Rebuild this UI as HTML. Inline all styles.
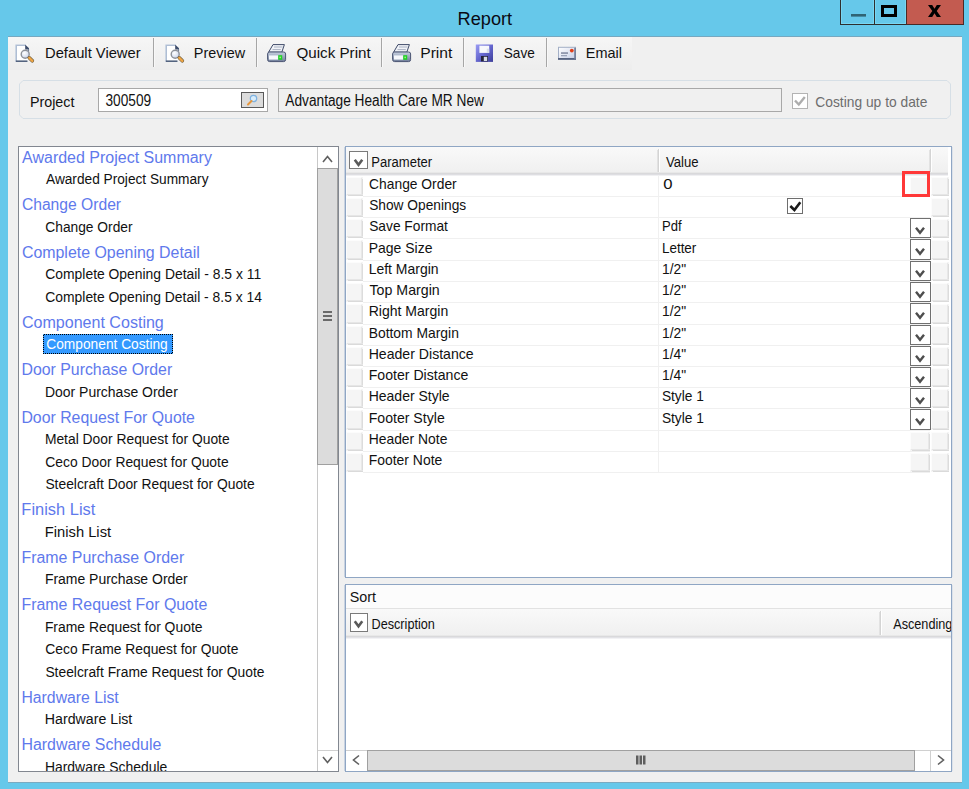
<!DOCTYPE html>
<html><head><meta charset="utf-8"><title>Report</title>
<style>html,body{margin:0;padding:0;background:#66C8EA;width:969px;height:789px;overflow:hidden}
svg{display:block} text{font-family:"Liberation Sans",sans-serif}</style></head>
<body><svg width="969" height="789" viewBox="0 0 969 789" font-family="Liberation Sans, sans-serif"><rect x="0" y="0" width="969" height="789" fill="#66C8EA" />
<text x="457.55" y="25" font-size="18" fill="#0A0A14" textLength="54.57" lengthAdjust="spacingAndGlyphs" >Report</text>
<rect x="840" y="0" width="1" height="25" fill="#2E2E2E" />
<rect x="874" y="0" width="1" height="25" fill="#2E2E2E" />
<rect x="840" y="24" width="66" height="1" fill="#2E2E2E" />
<rect x="841" y="0" width="1" height="24" fill="#79D6F2" />
<rect x="873" y="0" width="1" height="24" fill="#79D6F2" />
<rect x="875" y="0" width="1" height="24" fill="#79D6F2" />
<rect x="905" y="0" width="1" height="24" fill="#79D6F2" />
<rect x="841" y="23" width="33" height="1" fill="#79D6F2" />
<rect x="875" y="23" width="31" height="1" fill="#79D6F2" />
<rect x="851" y="14" width="15" height="2.6" fill="#306474" />
<rect x="882.5" y="6.5" width="13" height="9" fill="none" stroke="#000" stroke-width="3"/>
<rect x="906" y="0" width="58" height="25" fill="#C35B50" />
<rect x="906" y="0" width="1" height="25" fill="#4A2A26" />
<rect x="963" y="0" width="1" height="25" fill="#4A2A26" />
<rect x="906" y="24" width="58" height="1" fill="#4A2A26" />
<path d="M928 5 H932.2 L934.5 8.8 L936.8 5 H941 L936.7 11 L941 17 H936.8 L934.5 13.2 L932.2 17 H928 L932.3 11 Z" fill="#000"/>
<rect x="8" y="36" width="954" height="1" fill="#76A8C0" />
<rect x="8" y="37" width="954" height="745" fill="#F0F0F0" />
<rect x="8" y="782" width="954" height="1" fill="#7AAAC0" />
<defs><linearGradient id="tb" x1="0" y1="0" x2="0" y2="1"><stop offset="0" stop-color="#F6F6F6"/><stop offset="1" stop-color="#EDEDED"/></linearGradient><linearGradient id="gh" x1="0" y1="0" x2="0" y2="1"><stop offset="0" stop-color="#F9F9F9"/><stop offset="1" stop-color="#F0F0F0"/></linearGradient><linearGradient id="cell" x1="0" y1="0" x2="1" y2="1"><stop offset="0" stop-color="#FAFAFA"/><stop offset="1" stop-color="#E6E6E6"/></linearGradient></defs>
<rect x="8" y="37" width="624" height="33" fill="url(#tb)" />
<rect x="153" y="38" width="1" height="29" fill="#A6A6A6" />
<rect x="154" y="38" width="1" height="29" fill="#F8F8F8" />
<rect x="256" y="38" width="1" height="29" fill="#A6A6A6" />
<rect x="257" y="38" width="1" height="29" fill="#F8F8F8" />
<rect x="381" y="38" width="1" height="29" fill="#A6A6A6" />
<rect x="382" y="38" width="1" height="29" fill="#F8F8F8" />
<rect x="463" y="38" width="1" height="29" fill="#A6A6A6" />
<rect x="464" y="38" width="1" height="29" fill="#F8F8F8" />
<rect x="546" y="38" width="1" height="29" fill="#A6A6A6" />
<rect x="547" y="38" width="1" height="29" fill="#F8F8F8" />
<g transform="translate(15,44)"><defs><radialGradient id="lens{x}" cx="0.4" cy="0.35" r="0.7"><stop offset="0" stop-color="#FFFFFF"/><stop offset="1" stop-color="#C9D3EA"/></radialGradient></defs><rect x="0.5" y="0.5" width="12.5" height="17" fill="#FFFFFF"/><path d="M1.2 17.5 V1.2 H10.5" fill="none" stroke="#AFBED4" stroke-width="1.6"/><path d="M0.8 17.2 H12.5" stroke="#53637F" stroke-width="1.6"/><path d="M10.2 0.4 L14 4.2 L14 5.5 L10.2 5.5 Z" fill="#3E4D6C"/><path d="M13.5 5 V9" stroke="#6F7E98" stroke-width="1.2"/><circle cx="10.2" cy="10.2" r="4" fill="url(#lens{x})" stroke="#8D9199" stroke-width="1.4"/><path d="M14.3 13.8 L17.3 16.8" stroke="#6B5A3A" stroke-width="3.6" stroke-linecap="round"/><path d="M14.3 13.8 L17.3 16.8" stroke="#EEA545" stroke-width="2.4" stroke-linecap="round"/></g>
<text x="45.02" y="58" font-size="15" fill="#111" textLength="95.60" lengthAdjust="spacingAndGlyphs" >Default Viewer</text>
<g transform="translate(165,44)"><defs><radialGradient id="lens{x}" cx="0.4" cy="0.35" r="0.7"><stop offset="0" stop-color="#FFFFFF"/><stop offset="1" stop-color="#C9D3EA"/></radialGradient></defs><rect x="0.5" y="0.5" width="12.5" height="17" fill="#FFFFFF"/><path d="M1.2 17.5 V1.2 H10.5" fill="none" stroke="#AFBED4" stroke-width="1.6"/><path d="M0.8 17.2 H12.5" stroke="#53637F" stroke-width="1.6"/><path d="M10.2 0.4 L14 4.2 L14 5.5 L10.2 5.5 Z" fill="#3E4D6C"/><path d="M13.5 5 V9" stroke="#6F7E98" stroke-width="1.2"/><circle cx="10.2" cy="10.2" r="4" fill="url(#lens{x})" stroke="#8D9199" stroke-width="1.4"/><path d="M14.3 13.8 L17.3 16.8" stroke="#6B5A3A" stroke-width="3.6" stroke-linecap="round"/><path d="M14.3 13.8 L17.3 16.8" stroke="#EEA545" stroke-width="2.4" stroke-linecap="round"/></g>
<text x="193.85" y="58" font-size="15" fill="#111" textLength="51.21" lengthAdjust="spacingAndGlyphs" >Preview</text>
<g transform="translate(267,44)"><defs><linearGradient id="pb{x}" x1="0" y1="0" x2="0" y2="1"><stop offset="0" stop-color="#C9D2E2"/><stop offset="1" stop-color="#6E7C98"/></linearGradient></defs><path d="M6 0.6 H17.4 L14.8 8.2 H1.6 Z" fill="#F1F3F8" stroke="#3F4A68" stroke-width="1"/><path d="M7 3 H15.5 M5.5 5.6 H13.8" stroke="#A9B1C2" stroke-width="1"/><rect x="0.6" y="8" width="18" height="9.6" rx="2" fill="url(#pb{x})" stroke="#4A5472" stroke-width="1"/><rect x="2" y="11.4" width="9.5" height="4.2" fill="#F6F8FC"/><rect x="11.2" y="11.2" width="4" height="4.6" fill="#1FD126"/><rect x="12.4" y="12.6" width="1.6" height="1.6" fill="#9CF07A"/></g>
<text x="296.52" y="58" font-size="15" fill="#111" textLength="74.14" lengthAdjust="spacingAndGlyphs" >Quick Print</text>
<g transform="translate(392,44)"><defs><linearGradient id="pb{x}" x1="0" y1="0" x2="0" y2="1"><stop offset="0" stop-color="#C9D2E2"/><stop offset="1" stop-color="#6E7C98"/></linearGradient></defs><path d="M6 0.6 H17.4 L14.8 8.2 H1.6 Z" fill="#F1F3F8" stroke="#3F4A68" stroke-width="1"/><path d="M7 3 H15.5 M5.5 5.6 H13.8" stroke="#A9B1C2" stroke-width="1"/><rect x="0.6" y="8" width="18" height="9.6" rx="2" fill="url(#pb{x})" stroke="#4A5472" stroke-width="1"/><rect x="2" y="11.4" width="9.5" height="4.2" fill="#F6F8FC"/><rect x="11.2" y="11.2" width="4" height="4.6" fill="#1FD126"/><rect x="12.4" y="12.6" width="1.6" height="1.6" fill="#9CF07A"/></g>
<text x="420.25" y="58" font-size="15" fill="#111" textLength="32.04" lengthAdjust="spacingAndGlyphs" >Print</text>
<g transform="translate(475.8,44.2)"><defs><linearGradient id="fd{x}" x1="0" y1="0" x2="1" y2="1"><stop offset="0" stop-color="#9A9CF4"/><stop offset="0.5" stop-color="#6566CE"/><stop offset="1" stop-color="#3E3F9A"/></linearGradient></defs><rect x="0" y="0.3" width="17.2" height="17.4" fill="url(#fd{x})"/><rect x="3.6" y="1.5" width="9.8" height="7.2" fill="#F7F8FC"/><rect x="11" y="4.5" width="2.4" height="4.2" fill="#D8DEEA"/><rect x="5.2" y="11.8" width="7" height="5.4" fill="#23233A"/><rect x="8" y="12.6" width="3.4" height="4.2" fill="#D6DAE6"/></g>
<text x="503.79" y="58" font-size="15" fill="#111" textLength="31.05" lengthAdjust="spacingAndGlyphs" >Save</text>
<g transform="translate(558,46.8)"><defs><linearGradient id="em{x}" x1="0" y1="0" x2="1" y2="1"><stop offset="0" stop-color="#FFFFFF"/><stop offset="1" stop-color="#C5CDE6"/></linearGradient></defs><rect x="0.5" y="0.5" width="17" height="12" fill="url(#em{x})" stroke="#A3AFC6" stroke-width="1"/><rect x="0" y="11.2" width="18" height="1.8" fill="#566380"/><rect x="16.2" y="1" width="1.8" height="11" fill="#76819C"/><circle cx="13.8" cy="3.8" r="1.9" fill="#E2401A"/><rect x="3" y="5.6" width="7" height="1.3" fill="#6F7892"/><rect x="3" y="8.2" width="6" height="1.3" fill="#9AA2B8"/></g>
<text x="585.74" y="58" font-size="15" fill="#111" textLength="36.21" lengthAdjust="spacingAndGlyphs" >Email</text>
<path d="M23 80.5 H947 L950.5 84 V115 L947 118.5 H23 L19.5 115 V84 Z" fill="none" stroke="#D6DFE6" stroke-width="1"/>
<text x="29.96" y="107" font-size="15" fill="#111" textLength="44.45" lengthAdjust="spacingAndGlyphs" >Project</text>
<rect x="98.5" y="88.5" width="169" height="23" fill="#FFFFFF" stroke="#A8A8A8" stroke-width="1" />
<text x="105.52" y="106" font-size="16.3" fill="#111" textLength="45.62" lengthAdjust="spacingAndGlyphs" >300509</text>
<rect x="241.5" y="92.5" width="22" height="15" fill="#DCDCDC" stroke="#5A5A5A" stroke-width="1" />
<g transform="translate(245.5,93.5)"><circle cx="8" cy="5" r="3.2" fill="#D8ECFA" stroke="#7FB2E0" stroke-width="1.2"/><path d="M6 7.5 L2.5 11" stroke="#E8963A" stroke-width="2" stroke-linecap="round"/></g>
<rect x="278.5" y="88.5" width="503" height="23" fill="#F0F0F0" stroke="#A8A8A8" stroke-width="1" />
<text x="285.30" y="106" font-size="15.6" fill="#111" textLength="198.66" lengthAdjust="spacingAndGlyphs" >Advantage Health Care MR New</text>
<rect x="792.5" y="93.5" width="15" height="15" fill="#FFFFFF" stroke="#B3B3B3" stroke-width="1" />
<path d="M795 100.5 L798.8 104.5 L804.8 97" fill="none" stroke="#ADADAD" stroke-width="2.4"/>
<text x="815.31" y="107" font-size="15" fill="#6D6D6D" textLength="112.07" lengthAdjust="spacingAndGlyphs" >Costing up to date</text>
<rect x="18.5" y="146.5" width="320" height="625" fill="#FFFFFF" stroke="#828790" stroke-width="1" />
<rect x="317" y="147" width="1" height="624" fill="#C8C8C8" />
<rect x="318" y="147" width="20" height="21" fill="#FFFFFF" />
<path d="M323 162 L327.5 156.5 L332 162" fill="none" stroke="#606060" stroke-width="1.6"/>
<rect x="317.5" y="168.5" width="20" height="296" fill="#DCDCDC" stroke="#A0A0A0" stroke-width="1" />
<rect x="323" y="311" width="9" height="2" fill="#6A6A6A" />
<rect x="323" y="315" width="9" height="2" fill="#6A6A6A" />
<rect x="323" y="319" width="9" height="2" fill="#6A6A6A" />
<rect x="318" y="750" width="20" height="1" fill="#D0D0D0" />
<path d="M323 757 L327.5 762.5 L332 757" fill="none" stroke="#606060" stroke-width="1.6"/>
<defs><clipPath id="listclip"><rect x="19" y="147" width="298" height="624"/></clipPath></defs>
<g clip-path="url(#listclip)">
<text x="22.10" y="163" font-size="16" fill="#6079EC" textLength="189.81" lengthAdjust="spacingAndGlyphs" >Awarded Project Summary</text>
<text x="46.00" y="184" font-size="15.4" fill="#111" textLength="162.51" lengthAdjust="spacingAndGlyphs" >Awarded Project Summary</text>
<text x="21.92" y="210" font-size="16" fill="#6079EC" textLength="99.17" lengthAdjust="spacingAndGlyphs" >Change Order</text>
<text x="45.31" y="232" font-size="15.4" fill="#111" textLength="87.26" lengthAdjust="spacingAndGlyphs" >Change Order</text>
<text x="21.90" y="258" font-size="16" fill="#6079EC" textLength="177.88" lengthAdjust="spacingAndGlyphs" >Complete Opening Detail</text>
<text x="45.31" y="279" font-size="15.4" fill="#111" textLength="215.83" lengthAdjust="spacingAndGlyphs" >Complete Opening Detail - 8.5 x 11</text>
<text x="45.31" y="302" font-size="15.4" fill="#111" textLength="216.64" lengthAdjust="spacingAndGlyphs" >Complete Opening Detail - 8.5 x 14</text>
<text x="21.90" y="328" font-size="16" fill="#6079EC" textLength="141.92" lengthAdjust="spacingAndGlyphs" >Component Costing</text>
<defs><pattern id="dots" width="2" height="2" patternUnits="userSpaceOnUse"><rect width="1" height="1" fill="#000"/><rect x="1" y="1" width="1" height="1" fill="#000"/></pattern></defs>
<rect x="43" y="334" width="130" height="20" fill="#3399FF" />
<rect x="43" y="334" width="130" height="1" fill="url(#dots)" />
<rect x="43" y="353" width="130" height="1" fill="url(#dots)" />
<rect x="43" y="334" width="1" height="20" fill="url(#dots)" />
<rect x="172" y="334" width="1" height="20" fill="url(#dots)" />
<text x="46.31" y="349" font-size="15.4" fill="#FFFFFF" textLength="121.46" lengthAdjust="spacingAndGlyphs" >Component Costing</text>
<text x="21.43" y="375" font-size="16" fill="#6079EC" textLength="150.79" lengthAdjust="spacingAndGlyphs" >Door Purchase Order</text>
<text x="44.88" y="397" font-size="15.4" fill="#111" textLength="132.92" lengthAdjust="spacingAndGlyphs" >Door Purchase Order</text>
<text x="21.43" y="423" font-size="16" fill="#6079EC" textLength="173.50" lengthAdjust="spacingAndGlyphs" >Door Request For Quote</text>
<text x="44.89" y="444" font-size="15.4" fill="#111" textLength="184.76" lengthAdjust="spacingAndGlyphs" >Metal Door Request for Quote</text>
<text x="45.31" y="467" font-size="15.4" fill="#111" textLength="183.34" lengthAdjust="spacingAndGlyphs" >Ceco Door Request for Quote</text>
<text x="45.38" y="489" font-size="15.4" fill="#111" textLength="209.26" lengthAdjust="spacingAndGlyphs" >Steelcraft Door Request for Quote</text>
<text x="21.38" y="515" font-size="16" fill="#6079EC" textLength="74.02" lengthAdjust="spacingAndGlyphs" >Finish List</text>
<text x="44.82" y="537" font-size="15.4" fill="#111" textLength="66.27" lengthAdjust="spacingAndGlyphs" >Finish List</text>
<text x="21.43" y="563" font-size="16" fill="#6079EC" textLength="162.85" lengthAdjust="spacingAndGlyphs" >Frame Purchase Order</text>
<text x="44.88" y="584" font-size="15.4" fill="#111" textLength="142.87" lengthAdjust="spacingAndGlyphs" >Frame Purchase Order</text>
<text x="21.43" y="610" font-size="16" fill="#6079EC" textLength="185.84" lengthAdjust="spacingAndGlyphs" >Frame Request For Quote</text>
<text x="44.89" y="632" font-size="15.4" fill="#111" textLength="157.62" lengthAdjust="spacingAndGlyphs" >Frame Request for Quote</text>
<text x="45.31" y="654" font-size="15.4" fill="#111" textLength="193.06" lengthAdjust="spacingAndGlyphs" >Ceco Frame Request for Quote</text>
<text x="45.38" y="677" font-size="15.4" fill="#111" textLength="219.08" lengthAdjust="spacingAndGlyphs" >Steelcraft Frame Request for Quote</text>
<text x="21.44" y="703" font-size="16" fill="#6079EC" textLength="97.31" lengthAdjust="spacingAndGlyphs" >Hardware List</text>
<text x="44.87" y="724" font-size="15.4" fill="#111" textLength="87.46" lengthAdjust="spacingAndGlyphs" >Hardware List</text>
<text x="21.43" y="750" font-size="16" fill="#6079EC" textLength="139.86" lengthAdjust="spacingAndGlyphs" >Hardware Schedule</text>
<text x="44.88" y="772" font-size="15.4" fill="#111" textLength="122.41" lengthAdjust="spacingAndGlyphs" >Hardware Schedule</text>
</g>
<rect x="345.5" y="146.5" width="606" height="431" fill="#FFFFFF" stroke="#8FA6C4" stroke-width="1" />
<rect x="344" y="147" width="1" height="430" fill="#C8D2E0" />
<rect x="952" y="147" width="1" height="430" fill="#DCE2EA" />
<rect x="346" y="147" width="602" height="25" fill="url(#gh)" />
<rect x="346" y="172" width="602" height="1" fill="#E8E8E8" />
<rect x="346" y="173" width="602" height="1" fill="#D9D9DB" />
<rect x="346" y="174" width="602" height="1" fill="#DEDEE2" />
<rect x="346" y="175" width="602" height="1" fill="#F0F0F2" />
<rect x="657" y="150" width="1" height="22" fill="#E2E2E2" />
<rect x="658" y="149" width="1" height="23" fill="#D4D4D4" />
<rect x="659" y="149" width="1" height="23" fill="#FFFFFF" />
<rect x="929" y="150" width="1" height="22" fill="#E2E2E2" />
<rect x="930" y="149" width="1" height="23" fill="#D4D4D4" />
<rect x="931" y="149" width="1" height="23" fill="#FFFFFF" />
<rect x="349.5" y="151.5" width="18" height="17" fill="#FFFFFF" stroke="#7A7A7A" stroke-width="1" />
<path d="M354.75 159.8 L358.5 164.8 L362.25 159.8" fill="none" stroke="#5A5A5A" stroke-width="2.6"/>
<text x="371.26" y="167" font-size="13.8" fill="#111" textLength="60.92" lengthAdjust="spacingAndGlyphs" >Parameter</text>
<text x="665.93" y="167" font-size="13.8" fill="#111" textLength="32.64" lengthAdjust="spacingAndGlyphs" >Value</text>
<rect x="346" y="177" width="17" height="19" fill="#F5F5F5" />
<rect x="346" y="177" width="15" height="1" fill="#FCFCFC" />
<rect x="346" y="177" width="1" height="17" fill="#FCFCFC" />
<rect x="361" y="178" width="1" height="18" fill="#E8E8E8" />
<rect x="362" y="179" width="1" height="17" fill="#DCDCDC" />
<rect x="347" y="194" width="16" height="1" fill="#E6E6E6" />
<rect x="348" y="195" width="15" height="1" fill="#DADADA" />
<rect x="363" y="196" width="567" height="1" fill="#F0F0F0" />
<rect x="658" y="176" width="1" height="20" fill="#F0F0F0" />
<rect x="931" y="177" width="18" height="19" fill="#F5F5F5" />
<rect x="931" y="177" width="16" height="1" fill="#FCFCFC" />
<rect x="931" y="177" width="1" height="17" fill="#FCFCFC" />
<rect x="947" y="178" width="1" height="18" fill="#E8E8E8" />
<rect x="948" y="179" width="1" height="17" fill="#DCDCDC" />
<rect x="932" y="194" width="17" height="1" fill="#E6E6E6" />
<rect x="933" y="195" width="16" height="1" fill="#DADADA" />
<text x="369.11" y="189" font-size="14.6" fill="#111" textLength="87.56" lengthAdjust="spacingAndGlyphs" >Change Order</text>
<text x="663.23" y="189" font-size="15.4" fill="#111" textLength="9.27" lengthAdjust="spacingAndGlyphs" >0</text>
<rect x="910" y="177" width="20" height="19" fill="#F5F5F5" />
<rect x="910" y="177" width="18" height="1" fill="#FCFCFC" />
<rect x="910" y="177" width="1" height="17" fill="#FCFCFC" />
<rect x="928" y="178" width="1" height="18" fill="#E8E8E8" />
<rect x="929" y="179" width="1" height="17" fill="#DCDCDC" />
<rect x="911" y="194" width="19" height="1" fill="#E6E6E6" />
<rect x="912" y="195" width="18" height="1" fill="#DADADA" />
<rect x="346" y="198" width="17" height="19" fill="#F5F5F5" />
<rect x="346" y="198" width="15" height="1" fill="#FCFCFC" />
<rect x="346" y="198" width="1" height="17" fill="#FCFCFC" />
<rect x="361" y="199" width="1" height="18" fill="#E8E8E8" />
<rect x="362" y="200" width="1" height="17" fill="#DCDCDC" />
<rect x="347" y="215" width="16" height="1" fill="#E6E6E6" />
<rect x="348" y="216" width="15" height="1" fill="#DADADA" />
<rect x="363" y="217" width="567" height="1" fill="#F0F0F0" />
<rect x="658" y="197" width="1" height="20" fill="#F0F0F0" />
<rect x="931" y="198" width="18" height="19" fill="#F5F5F5" />
<rect x="931" y="198" width="16" height="1" fill="#FCFCFC" />
<rect x="931" y="198" width="1" height="17" fill="#FCFCFC" />
<rect x="947" y="199" width="1" height="18" fill="#E8E8E8" />
<rect x="948" y="200" width="1" height="17" fill="#DCDCDC" />
<rect x="932" y="215" width="17" height="1" fill="#E6E6E6" />
<rect x="933" y="216" width="16" height="1" fill="#DADADA" />
<text x="369.18" y="210" font-size="14.6" fill="#111" textLength="97.00" lengthAdjust="spacingAndGlyphs" >Show Openings</text>
<rect x="787.5" y="198.5" width="15" height="15" fill="#FFFFFF" stroke="#6E6E6E" stroke-width="1" />
<path d="M790.3 206 L794.4 210 L800.3 202.2" fill="none" stroke="#1A1A1A" stroke-width="2.6"/>
<rect x="346" y="219" width="17" height="19" fill="#F5F5F5" />
<rect x="346" y="219" width="15" height="1" fill="#FCFCFC" />
<rect x="346" y="219" width="1" height="17" fill="#FCFCFC" />
<rect x="361" y="220" width="1" height="18" fill="#E8E8E8" />
<rect x="362" y="221" width="1" height="17" fill="#DCDCDC" />
<rect x="347" y="236" width="16" height="1" fill="#E6E6E6" />
<rect x="348" y="237" width="15" height="1" fill="#DADADA" />
<rect x="363" y="238" width="567" height="1" fill="#F0F0F0" />
<rect x="658" y="218" width="1" height="20" fill="#F0F0F0" />
<rect x="931" y="219" width="18" height="19" fill="#F5F5F5" />
<rect x="931" y="219" width="16" height="1" fill="#FCFCFC" />
<rect x="931" y="219" width="1" height="17" fill="#FCFCFC" />
<rect x="947" y="220" width="1" height="18" fill="#E8E8E8" />
<rect x="948" y="221" width="1" height="17" fill="#DCDCDC" />
<rect x="932" y="236" width="17" height="1" fill="#E6E6E6" />
<rect x="933" y="237" width="16" height="1" fill="#DADADA" />
<text x="369.18" y="231" font-size="14.6" fill="#111" textLength="78.75" lengthAdjust="spacingAndGlyphs" >Save Format</text>
<text x="661.96" y="231" font-size="14.6" fill="#111" textLength="19.59" lengthAdjust="spacingAndGlyphs" >Pdf</text>
<rect x="910.5" y="218.5" width="20" height="19" fill="#FFFFFF" stroke="#707070" stroke-width="1" />
<path d="M916.0 227.8 L920 232.8 L924.0 227.8" fill="none" stroke="#4E4E4E" stroke-width="2.4"/>
<rect x="346" y="240" width="17" height="20" fill="#F5F5F5" />
<rect x="346" y="240" width="15" height="1" fill="#FCFCFC" />
<rect x="346" y="240" width="1" height="18" fill="#FCFCFC" />
<rect x="361" y="241" width="1" height="19" fill="#E8E8E8" />
<rect x="362" y="242" width="1" height="18" fill="#DCDCDC" />
<rect x="347" y="258" width="16" height="1" fill="#E6E6E6" />
<rect x="348" y="259" width="15" height="1" fill="#DADADA" />
<rect x="363" y="260" width="567" height="1" fill="#F0F0F0" />
<rect x="658" y="239" width="1" height="21" fill="#F0F0F0" />
<rect x="931" y="240" width="18" height="20" fill="#F5F5F5" />
<rect x="931" y="240" width="16" height="1" fill="#FCFCFC" />
<rect x="931" y="240" width="1" height="18" fill="#FCFCFC" />
<rect x="947" y="241" width="1" height="19" fill="#E8E8E8" />
<rect x="948" y="242" width="1" height="18" fill="#DCDCDC" />
<rect x="932" y="258" width="17" height="1" fill="#E6E6E6" />
<rect x="933" y="259" width="16" height="1" fill="#DADADA" />
<text x="368.68" y="253" font-size="14.6" fill="#111" textLength="63.76" lengthAdjust="spacingAndGlyphs" >Page Size</text>
<text x="661.92" y="253" font-size="14.6" fill="#111" textLength="34.44" lengthAdjust="spacingAndGlyphs" >Letter</text>
<rect x="910.5" y="239.5" width="20" height="20" fill="#FFFFFF" stroke="#707070" stroke-width="1" />
<path d="M916.0 248.8 L920 253.8 L924.0 248.8" fill="none" stroke="#4E4E4E" stroke-width="2.4"/>
<rect x="346" y="262" width="17" height="19" fill="#F5F5F5" />
<rect x="346" y="262" width="15" height="1" fill="#FCFCFC" />
<rect x="346" y="262" width="1" height="17" fill="#FCFCFC" />
<rect x="361" y="263" width="1" height="18" fill="#E8E8E8" />
<rect x="362" y="264" width="1" height="17" fill="#DCDCDC" />
<rect x="347" y="279" width="16" height="1" fill="#E6E6E6" />
<rect x="348" y="280" width="15" height="1" fill="#DADADA" />
<rect x="363" y="281" width="567" height="1" fill="#F0F0F0" />
<rect x="658" y="261" width="1" height="20" fill="#F0F0F0" />
<rect x="931" y="262" width="18" height="19" fill="#F5F5F5" />
<rect x="931" y="262" width="16" height="1" fill="#FCFCFC" />
<rect x="931" y="262" width="1" height="17" fill="#FCFCFC" />
<rect x="947" y="263" width="1" height="18" fill="#E8E8E8" />
<rect x="948" y="264" width="1" height="17" fill="#DCDCDC" />
<rect x="932" y="279" width="17" height="1" fill="#E6E6E6" />
<rect x="933" y="280" width="16" height="1" fill="#DADADA" />
<text x="368.68" y="274" font-size="14.6" fill="#111" textLength="69.89" lengthAdjust="spacingAndGlyphs" >Left Margin</text>
<text x="661.96" y="274" font-size="15.4" fill="#111" textLength="24.09" lengthAdjust="spacingAndGlyphs" >1/2"</text>
<rect x="910.5" y="261.5" width="20" height="19" fill="#FFFFFF" stroke="#707070" stroke-width="1" />
<path d="M916.0 270.8 L920 275.8 L924.0 270.8" fill="none" stroke="#4E4E4E" stroke-width="2.4"/>
<rect x="346" y="283" width="17" height="19" fill="#F5F5F5" />
<rect x="346" y="283" width="15" height="1" fill="#FCFCFC" />
<rect x="346" y="283" width="1" height="17" fill="#FCFCFC" />
<rect x="361" y="284" width="1" height="18" fill="#E8E8E8" />
<rect x="362" y="285" width="1" height="17" fill="#DCDCDC" />
<rect x="347" y="300" width="16" height="1" fill="#E6E6E6" />
<rect x="348" y="301" width="15" height="1" fill="#DADADA" />
<rect x="363" y="302" width="567" height="1" fill="#F0F0F0" />
<rect x="658" y="282" width="1" height="20" fill="#F0F0F0" />
<rect x="931" y="283" width="18" height="19" fill="#F5F5F5" />
<rect x="931" y="283" width="16" height="1" fill="#FCFCFC" />
<rect x="931" y="283" width="1" height="17" fill="#FCFCFC" />
<rect x="947" y="284" width="1" height="18" fill="#E8E8E8" />
<rect x="948" y="285" width="1" height="17" fill="#DCDCDC" />
<rect x="932" y="300" width="17" height="1" fill="#E6E6E6" />
<rect x="933" y="301" width="16" height="1" fill="#DADADA" />
<text x="369.52" y="295" font-size="14.6" fill="#111" textLength="70.16" lengthAdjust="spacingAndGlyphs" >Top Margin</text>
<text x="661.96" y="295" font-size="15.4" fill="#111" textLength="24.09" lengthAdjust="spacingAndGlyphs" >1/2"</text>
<rect x="910.5" y="282.5" width="20" height="19" fill="#FFFFFF" stroke="#707070" stroke-width="1" />
<path d="M916.0 291.8 L920 296.8 L924.0 291.8" fill="none" stroke="#4E4E4E" stroke-width="2.4"/>
<rect x="346" y="304" width="17" height="20" fill="#F5F5F5" />
<rect x="346" y="304" width="15" height="1" fill="#FCFCFC" />
<rect x="346" y="304" width="1" height="18" fill="#FCFCFC" />
<rect x="361" y="305" width="1" height="19" fill="#E8E8E8" />
<rect x="362" y="306" width="1" height="18" fill="#DCDCDC" />
<rect x="347" y="322" width="16" height="1" fill="#E6E6E6" />
<rect x="348" y="323" width="15" height="1" fill="#DADADA" />
<rect x="363" y="324" width="567" height="1" fill="#F0F0F0" />
<rect x="658" y="303" width="1" height="21" fill="#F0F0F0" />
<rect x="931" y="304" width="18" height="20" fill="#F5F5F5" />
<rect x="931" y="304" width="16" height="1" fill="#FCFCFC" />
<rect x="931" y="304" width="1" height="18" fill="#FCFCFC" />
<rect x="947" y="305" width="1" height="19" fill="#E8E8E8" />
<rect x="948" y="306" width="1" height="18" fill="#DCDCDC" />
<rect x="932" y="322" width="17" height="1" fill="#E6E6E6" />
<rect x="933" y="323" width="16" height="1" fill="#DADADA" />
<text x="368.68" y="316" font-size="14.6" fill="#111" textLength="79.55" lengthAdjust="spacingAndGlyphs" >Right Margin</text>
<text x="661.96" y="316" font-size="15.4" fill="#111" textLength="24.09" lengthAdjust="spacingAndGlyphs" >1/2"</text>
<rect x="910.5" y="303.5" width="20" height="20" fill="#FFFFFF" stroke="#707070" stroke-width="1" />
<path d="M916.0 312.8 L920 317.8 L924.0 312.8" fill="none" stroke="#4E4E4E" stroke-width="2.4"/>
<rect x="346" y="326" width="17" height="19" fill="#F5F5F5" />
<rect x="346" y="326" width="15" height="1" fill="#FCFCFC" />
<rect x="346" y="326" width="1" height="17" fill="#FCFCFC" />
<rect x="361" y="327" width="1" height="18" fill="#E8E8E8" />
<rect x="362" y="328" width="1" height="17" fill="#DCDCDC" />
<rect x="347" y="343" width="16" height="1" fill="#E6E6E6" />
<rect x="348" y="344" width="15" height="1" fill="#DADADA" />
<rect x="363" y="345" width="567" height="1" fill="#F0F0F0" />
<rect x="658" y="325" width="1" height="20" fill="#F0F0F0" />
<rect x="931" y="326" width="18" height="19" fill="#F5F5F5" />
<rect x="931" y="326" width="16" height="1" fill="#FCFCFC" />
<rect x="931" y="326" width="1" height="17" fill="#FCFCFC" />
<rect x="947" y="327" width="1" height="18" fill="#E8E8E8" />
<rect x="948" y="328" width="1" height="17" fill="#DCDCDC" />
<rect x="932" y="343" width="17" height="1" fill="#E6E6E6" />
<rect x="933" y="344" width="16" height="1" fill="#DADADA" />
<text x="368.69" y="338" font-size="14.6" fill="#111" textLength="90.18" lengthAdjust="spacingAndGlyphs" >Bottom Margin</text>
<text x="661.96" y="338" font-size="15.4" fill="#111" textLength="24.09" lengthAdjust="spacingAndGlyphs" >1/2"</text>
<rect x="910.5" y="325.5" width="20" height="19" fill="#FFFFFF" stroke="#707070" stroke-width="1" />
<path d="M916.0 334.8 L920 339.8 L924.0 334.8" fill="none" stroke="#4E4E4E" stroke-width="2.4"/>
<rect x="346" y="347" width="17" height="19" fill="#F5F5F5" />
<rect x="346" y="347" width="15" height="1" fill="#FCFCFC" />
<rect x="346" y="347" width="1" height="17" fill="#FCFCFC" />
<rect x="361" y="348" width="1" height="18" fill="#E8E8E8" />
<rect x="362" y="349" width="1" height="17" fill="#DCDCDC" />
<rect x="347" y="364" width="16" height="1" fill="#E6E6E6" />
<rect x="348" y="365" width="15" height="1" fill="#DADADA" />
<rect x="363" y="366" width="567" height="1" fill="#F0F0F0" />
<rect x="658" y="346" width="1" height="20" fill="#F0F0F0" />
<rect x="931" y="347" width="18" height="19" fill="#F5F5F5" />
<rect x="931" y="347" width="16" height="1" fill="#FCFCFC" />
<rect x="931" y="347" width="1" height="17" fill="#FCFCFC" />
<rect x="947" y="348" width="1" height="18" fill="#E8E8E8" />
<rect x="948" y="349" width="1" height="17" fill="#DCDCDC" />
<rect x="932" y="364" width="17" height="1" fill="#E6E6E6" />
<rect x="933" y="365" width="16" height="1" fill="#DADADA" />
<text x="368.67" y="359" font-size="14.6" fill="#111" textLength="105.04" lengthAdjust="spacingAndGlyphs" >Header Distance</text>
<text x="661.96" y="359" font-size="15.4" fill="#111" textLength="24.09" lengthAdjust="spacingAndGlyphs" >1/4"</text>
<rect x="910.5" y="346.5" width="20" height="19" fill="#FFFFFF" stroke="#707070" stroke-width="1" />
<path d="M916.0 355.8 L920 360.8 L924.0 355.8" fill="none" stroke="#4E4E4E" stroke-width="2.4"/>
<rect x="346" y="368" width="17" height="19" fill="#F5F5F5" />
<rect x="346" y="368" width="15" height="1" fill="#FCFCFC" />
<rect x="346" y="368" width="1" height="17" fill="#FCFCFC" />
<rect x="361" y="369" width="1" height="18" fill="#E8E8E8" />
<rect x="362" y="370" width="1" height="17" fill="#DCDCDC" />
<rect x="347" y="385" width="16" height="1" fill="#E6E6E6" />
<rect x="348" y="386" width="15" height="1" fill="#DADADA" />
<rect x="363" y="387" width="567" height="1" fill="#F0F0F0" />
<rect x="658" y="367" width="1" height="20" fill="#F0F0F0" />
<rect x="931" y="368" width="18" height="19" fill="#F5F5F5" />
<rect x="931" y="368" width="16" height="1" fill="#FCFCFC" />
<rect x="931" y="368" width="1" height="17" fill="#FCFCFC" />
<rect x="947" y="369" width="1" height="18" fill="#E8E8E8" />
<rect x="948" y="370" width="1" height="17" fill="#DCDCDC" />
<rect x="932" y="385" width="17" height="1" fill="#E6E6E6" />
<rect x="933" y="386" width="16" height="1" fill="#DADADA" />
<text x="368.67" y="380" font-size="14.6" fill="#111" textLength="99.68" lengthAdjust="spacingAndGlyphs" >Footer Distance</text>
<text x="661.96" y="380" font-size="15.4" fill="#111" textLength="24.09" lengthAdjust="spacingAndGlyphs" >1/4"</text>
<rect x="910.5" y="367.5" width="20" height="19" fill="#FFFFFF" stroke="#707070" stroke-width="1" />
<path d="M916.0 376.8 L920 381.8 L924.0 376.8" fill="none" stroke="#4E4E4E" stroke-width="2.4"/>
<rect x="346" y="389" width="17" height="19" fill="#F5F5F5" />
<rect x="346" y="389" width="15" height="1" fill="#FCFCFC" />
<rect x="346" y="389" width="1" height="17" fill="#FCFCFC" />
<rect x="361" y="390" width="1" height="18" fill="#E8E8E8" />
<rect x="362" y="391" width="1" height="17" fill="#DCDCDC" />
<rect x="347" y="406" width="16" height="1" fill="#E6E6E6" />
<rect x="348" y="407" width="15" height="1" fill="#DADADA" />
<rect x="363" y="408" width="567" height="1" fill="#F0F0F0" />
<rect x="658" y="388" width="1" height="20" fill="#F0F0F0" />
<rect x="931" y="389" width="18" height="19" fill="#F5F5F5" />
<rect x="931" y="389" width="16" height="1" fill="#FCFCFC" />
<rect x="931" y="389" width="1" height="17" fill="#FCFCFC" />
<rect x="947" y="390" width="1" height="18" fill="#E8E8E8" />
<rect x="948" y="391" width="1" height="17" fill="#DCDCDC" />
<rect x="932" y="406" width="17" height="1" fill="#E6E6E6" />
<rect x="933" y="407" width="16" height="1" fill="#DADADA" />
<text x="368.68" y="401" font-size="14.6" fill="#111" textLength="80.99" lengthAdjust="spacingAndGlyphs" >Header Style</text>
<text x="661.88" y="401" font-size="14.6" fill="#111" textLength="42.07" lengthAdjust="spacingAndGlyphs" >Style 1</text>
<rect x="910.5" y="388.5" width="20" height="19" fill="#FFFFFF" stroke="#707070" stroke-width="1" />
<path d="M916.0 397.8 L920 402.8 L924.0 397.8" fill="none" stroke="#4E4E4E" stroke-width="2.4"/>
<rect x="346" y="410" width="17" height="20" fill="#F5F5F5" />
<rect x="346" y="410" width="15" height="1" fill="#FCFCFC" />
<rect x="346" y="410" width="1" height="18" fill="#FCFCFC" />
<rect x="361" y="411" width="1" height="19" fill="#E8E8E8" />
<rect x="362" y="412" width="1" height="18" fill="#DCDCDC" />
<rect x="347" y="428" width="16" height="1" fill="#E6E6E6" />
<rect x="348" y="429" width="15" height="1" fill="#DADADA" />
<rect x="363" y="430" width="567" height="1" fill="#F0F0F0" />
<rect x="658" y="409" width="1" height="21" fill="#F0F0F0" />
<rect x="931" y="410" width="18" height="20" fill="#F5F5F5" />
<rect x="931" y="410" width="16" height="1" fill="#FCFCFC" />
<rect x="931" y="410" width="1" height="18" fill="#FCFCFC" />
<rect x="947" y="411" width="1" height="19" fill="#E8E8E8" />
<rect x="948" y="412" width="1" height="18" fill="#DCDCDC" />
<rect x="932" y="428" width="17" height="1" fill="#E6E6E6" />
<rect x="933" y="429" width="16" height="1" fill="#DADADA" />
<text x="368.67" y="423" font-size="14.6" fill="#111" textLength="76.11" lengthAdjust="spacingAndGlyphs" >Footer Style</text>
<text x="661.88" y="423" font-size="14.6" fill="#111" textLength="42.07" lengthAdjust="spacingAndGlyphs" >Style 1</text>
<rect x="910.5" y="409.5" width="20" height="20" fill="#FFFFFF" stroke="#707070" stroke-width="1" />
<path d="M916.0 418.8 L920 423.8 L924.0 418.8" fill="none" stroke="#4E4E4E" stroke-width="2.4"/>
<rect x="346" y="432" width="17" height="19" fill="#F5F5F5" />
<rect x="346" y="432" width="15" height="1" fill="#FCFCFC" />
<rect x="346" y="432" width="1" height="17" fill="#FCFCFC" />
<rect x="361" y="433" width="1" height="18" fill="#E8E8E8" />
<rect x="362" y="434" width="1" height="17" fill="#DCDCDC" />
<rect x="347" y="449" width="16" height="1" fill="#E6E6E6" />
<rect x="348" y="450" width="15" height="1" fill="#DADADA" />
<rect x="363" y="451" width="567" height="1" fill="#F0F0F0" />
<rect x="658" y="431" width="1" height="20" fill="#F0F0F0" />
<rect x="931" y="432" width="18" height="19" fill="#F5F5F5" />
<rect x="931" y="432" width="16" height="1" fill="#FCFCFC" />
<rect x="931" y="432" width="1" height="17" fill="#FCFCFC" />
<rect x="947" y="433" width="1" height="18" fill="#E8E8E8" />
<rect x="948" y="434" width="1" height="17" fill="#DCDCDC" />
<rect x="932" y="449" width="17" height="1" fill="#E6E6E6" />
<rect x="933" y="450" width="16" height="1" fill="#DADADA" />
<text x="368.69" y="444" font-size="14.6" fill="#111" textLength="78.67" lengthAdjust="spacingAndGlyphs" >Header Note</text>
<rect x="910" y="432" width="20" height="19" fill="#F5F5F5" />
<rect x="910" y="432" width="18" height="1" fill="#FCFCFC" />
<rect x="910" y="432" width="1" height="17" fill="#FCFCFC" />
<rect x="928" y="433" width="1" height="18" fill="#E8E8E8" />
<rect x="929" y="434" width="1" height="17" fill="#DCDCDC" />
<rect x="911" y="449" width="19" height="1" fill="#E6E6E6" />
<rect x="912" y="450" width="18" height="1" fill="#DADADA" />
<rect x="346" y="453" width="17" height="19" fill="#F5F5F5" />
<rect x="346" y="453" width="15" height="1" fill="#FCFCFC" />
<rect x="346" y="453" width="1" height="17" fill="#FCFCFC" />
<rect x="361" y="454" width="1" height="18" fill="#E8E8E8" />
<rect x="362" y="455" width="1" height="17" fill="#DCDCDC" />
<rect x="347" y="470" width="16" height="1" fill="#E6E6E6" />
<rect x="348" y="471" width="15" height="1" fill="#DADADA" />
<rect x="363" y="472" width="567" height="1" fill="#F0F0F0" />
<rect x="658" y="452" width="1" height="20" fill="#F0F0F0" />
<rect x="931" y="453" width="18" height="19" fill="#F5F5F5" />
<rect x="931" y="453" width="16" height="1" fill="#FCFCFC" />
<rect x="931" y="453" width="1" height="17" fill="#FCFCFC" />
<rect x="947" y="454" width="1" height="18" fill="#E8E8E8" />
<rect x="948" y="455" width="1" height="17" fill="#DCDCDC" />
<rect x="932" y="470" width="17" height="1" fill="#E6E6E6" />
<rect x="933" y="471" width="16" height="1" fill="#DADADA" />
<text x="368.69" y="465" font-size="14.6" fill="#111" textLength="73.58" lengthAdjust="spacingAndGlyphs" >Footer Note</text>
<rect x="910" y="453" width="20" height="19" fill="#F5F5F5" />
<rect x="910" y="453" width="18" height="1" fill="#FCFCFC" />
<rect x="910" y="453" width="1" height="17" fill="#FCFCFC" />
<rect x="928" y="454" width="1" height="18" fill="#E8E8E8" />
<rect x="929" y="455" width="1" height="17" fill="#DCDCDC" />
<rect x="911" y="470" width="19" height="1" fill="#E6E6E6" />
<rect x="912" y="471" width="18" height="1" fill="#DADADA" />
<rect x="903.5" y="172.5" width="25" height="23" fill="none" stroke="#FF3838" stroke-width="3"/>
<rect x="345.5" y="584.5" width="606" height="187" fill="#FFFFFF" stroke="#8FA6C4" stroke-width="1" />
<rect x="344" y="585" width="1" height="186" fill="#C8D2E0" />
<rect x="952" y="585" width="1" height="186" fill="#DCE2EA" />
<rect x="346" y="585" width="605" height="23" fill="#FCFCFC" />
<rect x="346" y="608" width="605" height="1" fill="#E2E2E2" />
<rect x="346" y="609" width="605" height="26" fill="url(#gh)" />
<rect x="346" y="635" width="605" height="1" fill="#E8E8E8" />
<rect x="346" y="636" width="605" height="1" fill="#D9D9DB" />
<rect x="346" y="637" width="605" height="1" fill="#E2E2E6" />
<rect x="346" y="638" width="605" height="1" fill="#F2F2F4" />
<text x="349.76" y="602" font-size="14.8" fill="#111" textLength="26.27" lengthAdjust="spacingAndGlyphs" >Sort</text>
<rect x="350.5" y="613.5" width="17" height="18" fill="#FFFFFF" stroke="#7A7A7A" stroke-width="1" />
<path d="M354.75 621.3 L358.5 626.3 L362.25 621.3" fill="none" stroke="#5A5A5A" stroke-width="2.6"/>
<text x="371.49" y="629" font-size="13.8" fill="#111" textLength="63.40" lengthAdjust="spacingAndGlyphs" >Description</text>
<rect x="879" y="612" width="1" height="23" fill="#E2E2E2" />
<rect x="880" y="611" width="1" height="24" fill="#D4D4D4" />
<rect x="881" y="611" width="1" height="24" fill="#FFFFFF" />
<defs><clipPath id="sclip"><rect x="346" y="585" width="605" height="186"/></clipPath></defs>
<g clip-path="url(#sclip)">
<text x="893.20" y="629" font-size="13.8" fill="#111" textLength="59.19" lengthAdjust="spacingAndGlyphs" >Ascending</text>
</g>
<rect x="346" y="750" width="605" height="21" fill="#FFFFFF" />
<rect x="346" y="750" width="605" height="1" fill="#D0D0D0" />
<path d="M359 755.5 L353.5 760 L359 764.5" fill="none" stroke="#606060" stroke-width="1.6"/>
<rect x="367.5" y="750.5" width="547" height="20" fill="#DCDCDC" stroke="#A0A0A0" stroke-width="1" />
<rect x="636" y="755.5" width="2.5" height="9" fill="#5E5E5E" />
<rect x="639.5" y="755.5" width="2.5" height="9" fill="#5E5E5E" />
<rect x="643" y="755.5" width="2.5" height="9" fill="#5E5E5E" />
<rect x="930" y="751" width="1" height="20" fill="#D0D0D0" />
<path d="M938 755.5 L943.5 760 L938 764.5" fill="none" stroke="#606060" stroke-width="1.6"/></svg></body></html>
